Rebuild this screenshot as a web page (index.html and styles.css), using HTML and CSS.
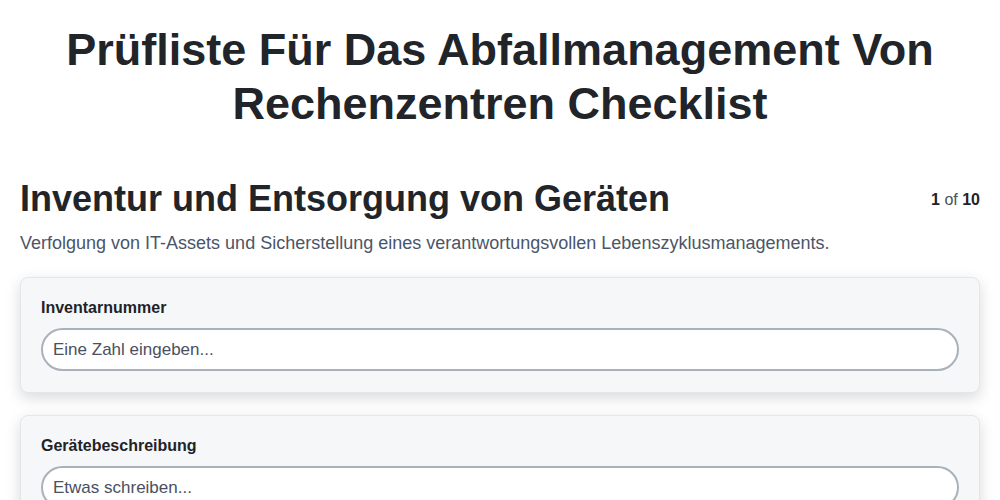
FILE: index.html
```html
<!DOCTYPE html>
<html lang="de">
<head>
    <meta charset="UTF-8">
    <meta name="viewport" content="width=device-width, initial-scale=1.0">
    <title>Prüfliste Für Das Abfallmanagement Von Rechenzentren Checklist</title>
    <link rel="stylesheet" href="styles.css">
</head>
<body>
    <div class="container">
        <h1 class="page-title">Prüfliste Für Das Abfallmanagement Von Rechenzentren Checklist</h1>

        <div class="section-header">
            <h2>Inventur und Entsorgung von Geräten</h2>
            <div class="step-count"><b>1</b> of <b>10</b></div>
        </div>
        <p class="section-desc">Verfolgung von IT-Assets und Sicherstellung eines verantwortungsvollen Lebenszyklusmanagements.</p>

        <div class="field-card">
            <label for="inventoryNo">Inventarnummer</label>
            <input type="number" id="inventoryNo" placeholder="Eine Zahl eingeben...">
        </div>

        <div class="field-card">
            <label for="deviceDesc">Gerätebeschreibung</label>
            <input type="text" id="deviceDesc" placeholder="Etwas schreiben...">
        </div>

        <div class="field-card">
            <label for="disposalDate">Entsorgungsdatum</label>
            <input type="text" id="disposalDate" placeholder="Datum wählen...">
        </div>
    </div>
</body>
</html>
```

FILE: styles.css
```css
body {
    font-family: "Liberation Sans", Arial, sans-serif;
    margin: 0;
    background-color: white;
    color: #212529;
}

.container {
    padding: 20px;
}

.page-title {
    font-size: 45px;
    line-height: 1.2;
    text-align: center;
    margin: 3px 0 46px;
}

.section-header {
    display: flex;
    justify-content: space-between;
    align-items: center;
}

.section-header h2 {
    font-size: 36px;
    line-height: 1.2;
    margin: 0;
}

.step-count {
    font-size: 16px;
    color: #4a5058;
    margin-top: 2px;
}

.step-count b {
    color: #1f2328;
}

.section-desc {
    font-size: 18px;
    line-height: 27px;
    color: #4a5568;
    margin: 10px 0 20px;
}

.field-card {
    background-color: #f6f7f9;
    border: 1px solid #e3e6ea;
    border-radius: 8px;
    padding: 18px 20px 21px;
    margin-bottom: 22px;
    box-shadow: 0 5px 15px rgba(0,0,0,0.15);
}

.field-card label {
    display: block;
    font-size: 16px;
    font-weight: bold;
    line-height: 24px;
    margin-bottom: 8px;
    color: #1f2328;
}

.field-card input {
    display: block;
    box-sizing: border-box;
    width: 100%;
    height: 43px;
    padding: 0 10px;
    font-family: inherit;
    font-size: 17px;
    color: #212529;
    background-color: white;
    border: 2px solid #a9b1ba;
    border-radius: 22px;
    outline: none;
}

.field-card input::placeholder {
    color: #4a5060;
}
```
